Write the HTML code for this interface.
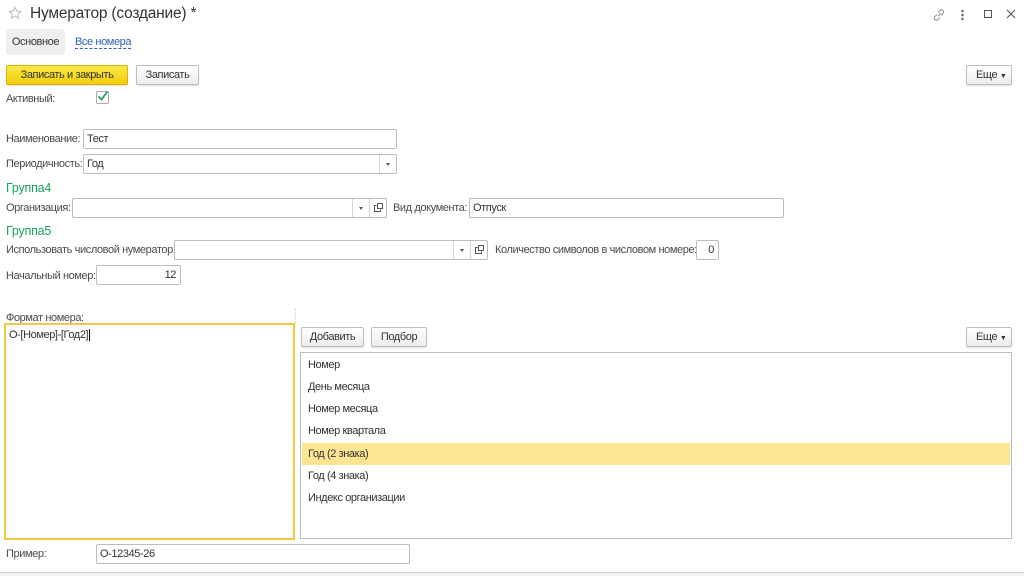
<!DOCTYPE html>
<html><head><meta charset="utf-8"><style>
*{box-sizing:border-box;margin:0;padding:0}
body{width:1024px;height:576px;background:#fff;font-family:"Liberation Sans",Arial,sans-serif;font-size:11px;letter-spacing:-0.4px;color:#404040;position:relative;overflow:hidden}
.a{position:absolute;white-space:nowrap}
.lbl{position:absolute;white-space:nowrap;line-height:12px;color:#4a4a4a}
.in{position:absolute;border:1px solid #bdbdbd;border-radius:2px;background:#fff;height:20px;line-height:18px;padding-left:3px;color:#333}
.btn{position:absolute;border:1px solid #bdbdbd;border-radius:2px;background:linear-gradient(#fff,#ececec);height:20px;line-height:18px;text-align:center;color:#333;box-shadow:0 1px 1px rgba(0,0,0,.12)}
.dd{position:absolute;top:0;bottom:0;border-left:1px solid #d6d6d6;width:17px}
.dd:after{content:"";position:absolute;left:6px;top:8px;border:2.5px solid transparent;border-top:3px solid #555}
.op{position:absolute;top:0;bottom:0;border-left:1px solid #d6d6d6;width:17px}
.grp{position:absolute;color:#1aa35a;font-size:12.5px;letter-spacing:-0.2px}
.row{position:absolute;left:1px;right:1px;height:22px;line-height:22px;padding-left:6px;color:#333}
</style></head><body>
<svg class="a" style="left:8px;top:6px" width="14" height="14" viewBox="0 0 14 14"><path d="M7 1.2l1.7 3.8 4.1.4-3.1 2.7.9 4-3.6-2.1-3.6 2.1.9-4-3.1-2.7 4.1-.4z" fill="none" stroke="#bbb" stroke-width="1"/></svg>
<div class="a" style="left:30px;top:5px;font-size:15.5px;letter-spacing:-0.2px;color:#333">Нумератор (создание) *</div>
<svg class="a" style="left:932px;top:8px" width="14" height="14" viewBox="0 0 14 14" fill="none" stroke="#999" stroke-width="1.2"><path d="M6 8l3-3M5 6.5L3 8.5a2 2 0 003 3L8 9.5M9 7.5l2-2a2 2 0 00-3-3L6 4.5"/></svg>
<div class="a" style="left:961px;top:9px;width:3px;height:12px;background:radial-gradient(circle,#777 1.2px,transparent 1.5px) 0 0/3px 4px"></div>
<div class="a" style="left:984px;top:10px;width:8px;height:8px;border:1px solid #555"></div>
<svg class="a" style="left:1006px;top:9px" width="10" height="10" viewBox="0 0 10 10" stroke="#555" stroke-width="1.1"><path d="M1 1l8 8M9 1l-8 8"/></svg>

<div class="a" style="left:6px;top:29px;width:59px;height:26px;background:#efefef;border-radius:3px;line-height:26px;text-align:center;color:#333">Основное</div>
<div class="a" style="left:75px;top:37px;color:#2f62b0;border-bottom:1px dashed #2f62b0;line-height:11px">Все номера</div>

<div class="btn" style="left:6px;top:65px;width:122px;background:linear-gradient(#fce94a,#f2cd07);border-color:#d9b300;color:#333">Записать и закрыть</div>
<div class="btn" style="left:136px;top:65px;width:63px">Записать</div>
<div class="btn" style="left:966px;top:65px;width:46px;text-align:left;padding-left:9px">Еще <span style="font-size:7px">▼</span></div>

<div class="lbl" style="left:6px;top:93px">Активный:</div>
<div class="a" style="left:96px;top:91px;width:13px;height:13px;border:1px solid #aaa;border-radius:2px;background:#fff"></div>
<svg class="a" style="left:96px;top:89px" width="14" height="14" viewBox="0 0 14 14"><path d="M2.5 7.5l3 3 6-8" fill="none" stroke="#1aa35a" stroke-width="1.8"/></svg>

<div class="lbl" style="left:6px;top:133px">Наименование:</div>
<div class="in" style="left:83px;top:129px;width:314px">Тест</div>
<div class="lbl" style="left:6px;top:158px">Периодичность:</div>
<div class="in" style="left:83px;top:154px;width:314px">Год<div class="dd" style="right:0"></div></div>

<div class="grp" style="left:6px;top:181px">Группа4</div>
<div class="lbl" style="left:6px;top:202px">Организация:</div>
<div class="in" style="left:72px;top:198px;width:315px"><div class="dd" style="right:17px"></div><div class="op" style="right:0"><svg style="position:absolute;left:4px;top:4px" width="9" height="9" viewBox="0 0 9 9" fill="none" stroke="#555"><rect x="3.5" y=".5" width="5" height="5"/><path d="M2.5 2.5h-2v6h6v-2"/></svg></div></div>
<div class="lbl" style="left:393px;top:202px">Вид документа:</div>
<div class="in" style="left:469px;top:198px;width:315px">Отпуск</div>

<div class="grp" style="left:6px;top:224px">Группа5</div>
<div class="lbl" style="left:6px;top:244px">Использовать числовой нумератор:</div>
<div class="in" style="left:174px;top:240px;width:314px"><div class="dd" style="right:17px"></div><div class="op" style="right:0"><svg style="position:absolute;left:4px;top:4px" width="9" height="9" viewBox="0 0 9 9" fill="none" stroke="#555"><rect x="3.5" y=".5" width="5" height="5"/><path d="M2.5 2.5h-2v6h6v-2"/></svg></div></div>
<div class="lbl" style="left:495px;top:244px">Количество символов в числовом номере:</div>
<div class="in" style="left:696px;top:240px;width:23px;text-align:right;padding-right:4px">0</div>

<div class="lbl" style="left:6px;top:270px">Начальный номер:</div>
<div class="in" style="left:96px;top:265px;width:85px;text-align:right;padding-right:4px">12</div>

<div class="lbl" style="left:6px;top:312px">Формат номера:</div>
<div class="a" style="left:295px;top:308px;height:16px;border-left:1px dashed #ddd"></div>
<div class="a" style="left:4px;top:323px;width:291px;height:217px;border:2px solid #f2c744;padding:4px 3px;color:#333">О-[Номер]-[Год2]<span style="border-left:1px solid #000;margin-left:1px"></span></div>

<div class="btn" style="left:301px;top:327px;width:63px">Добавить</div>
<div class="btn" style="left:371px;top:327px;width:56px">Подбор</div>
<div class="btn" style="left:966px;top:327px;width:46px;text-align:left;padding-left:9px">Еще <span style="font-size:7px">▼</span></div>

<div class="a" style="left:300px;top:352px;width:712px;height:187px;border:1px solid #bdbdbd">
<div class="row" style="top:1px">Номер</div>
<div class="row" style="top:23px">День месяца</div>
<div class="row" style="top:45px">Номер месяца</div>
<div class="row" style="top:67px">Номер квартала</div>
<div class="row" style="top:90px;background:#fde592">Год (2 знака)</div>
<div class="row" style="top:112px">Год (4 знака)</div>
<div class="row" style="top:134px">Индекс организации</div>
</div>

<div class="lbl" style="left:6px;top:548px">Пример:</div>
<div class="in" style="left:96px;top:544px;width:314px">О-12345-26</div>
<div class="a" style="left:0;top:572px;width:1024px;height:4px;background:#f2f2f2;border-top:1px solid #cfcfcf"></div>
</body></html>
